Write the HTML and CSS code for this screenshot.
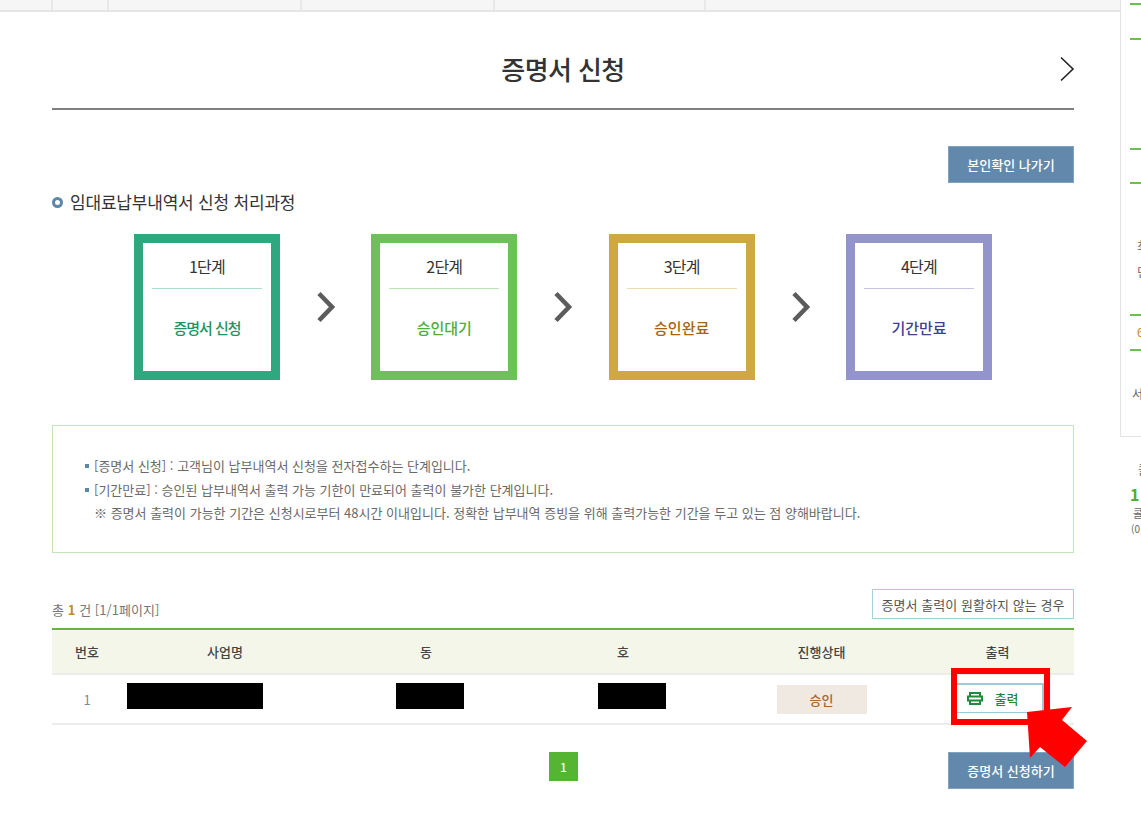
FILE: index.html
```html
<!DOCTYPE html>
<html lang="ko">
<head>
<meta charset="utf-8">
<title>증명서 신청</title>
<link rel="stylesheet" href="styles.css">
</head>
<body>
<div class="page">
  <main class="main">
    <div class="tabs"><span class="tab t1"></span><span class="tab t2"></span><span class="tab t3"></span><span class="tab t4"></span><span class="tab t5"></span><span class="tab t6"></span></div>
    <div class="content">
      <header class="head">
        <h1>증명서 신청</h1>
        <svg class="next" width="16" height="26" viewBox="0 0 16 26"><path d="M2 1.500 14 13 2 24.500" fill="none" stroke="#222" stroke-width="1.600"/></svg>
      </header>
      <div class="actions"><a class="btn">본인확인 나가기</a></div>
      <h2 class="sub">임대료납부내역서 신청 처리과정</h2>
      <div class="steps">
        <div class="step s1"><div class="num">1단계</div><div class="name">증명서 신청</div></div>
        <svg class="arrow" width="20" height="32" viewBox="0 0 20 32"><path d="M3 2.500 16 16 3 29.500" fill="none" stroke="#5c5c5c" stroke-width="4.600"/></svg>
        <div class="step s2"><div class="num">2단계</div><div class="name">승인대기</div></div>
        <svg class="arrow" width="20" height="32" viewBox="0 0 20 32"><path d="M3 2.500 16 16 3 29.500" fill="none" stroke="#5c5c5c" stroke-width="4.600"/></svg>
        <div class="step s3"><div class="num">3단계</div><div class="name">승인완료</div></div>
        <svg class="arrow" width="20" height="32" viewBox="0 0 20 32"><path d="M3 2.500 16 16 3 29.500" fill="none" stroke="#5c5c5c" stroke-width="4.600"/></svg>
        <div class="step s4"><div class="num">4단계</div><div class="name">기간만료</div></div>
      </div>
      <div class="notice">
        <p class="bul">[증명서 신청] : 고객님이 납부내역서 신청을 전자접수하는 단계입니다.</p>
        <p class="bul">[기간만료] : 승인된 납부내역서 출력 가능 기한이 만료되어 출력이 불가한 단계입니다.</p>
        <p class="ref">※ 증명서 출력이 가능한 기간은 신청시로부터 48시간 이내입니다. 정확한 납부내역 증빙을 위해 출력가능한 기간을 두고 있는 점 양해바랍니다.</p>
      </div>
      <div class="listbar">
        <span class="count">총 <b>1</b> 건 [1/1페이지]</span>
        <a class="help">증명서 출력이 원활하지 않는 경우</a>
      </div>
      <table class="list">
        <thead><tr><th class="c1">번호</th><th class="c2">사업명</th><th class="c3">동</th><th class="c4">호</th><th class="c5">진행상태</th><th class="c6">출력</th></tr></thead>
        <tbody><tr>
          <td>1</td>
          <td class="mask-cell"><span class="mask m1"></span></td>
          <td class="mask-cell"><span class="mask m2"></span></td>
          <td class="mask-cell"><span class="mask m2 m3"></span></td>
          <td><span class="state">승인</span></td>
          <td><a class="print"><svg width="16" height="13" viewBox="0 0 16 13"><path d="M3 4.500V1h10v3.500M1 4.500h14v4H1zM3 8.500V12h10V8.500" fill="none" stroke="#1f8a3c" stroke-width="2"/></svg>출력</a></td>
        </tr></tbody>
      </table>
      <div class="foot">
        <a class="pagenum">1</a>
        <a class="btn wide">증명서 신청하기</a>
      </div>
    </div>
  </main>
  <aside class="side">
    <div class="box">
      <i class="line l1"></i><i class="line l2"></i><i class="line l3"></i><i class="line l4"></i><i class="line l5"></i><i class="line l6"></i>
      <span class="frag f1">최</span><span class="frag f2">던</span><span class="frag f3">6</span><span class="frag f4">서</span>
    </div>
    <div class="tel"><span class="tel1">콜</span><strong>1</strong><span class="tel2">콜</span><span class="tel3">(0</span></div>
  </aside>
</div>
<svg class="mark-arrow" width="70" height="70" viewBox="0 0 70 70"><polygon points="4,7 49,2 39,15 64,36 42,62 17,42 7,53" fill="#ff0000"/></svg>
<div class="mark-box"></div>
</body>
</html>
```
FILE: styles.css
```css
* { box-sizing: border-box; }
html, body { margin: 0; padding: 0; background: #fff; }
body { font-family: "Noto Sans CJK KR", "Noto Sans", sans-serif; color: #333; overflow: hidden; height: 816px; position: relative; }
a { text-decoration: none; }
.page { display: flex; width: 1141px; }
.main { width: 1120px; flex: none; }
.tabs { display: flex; height: 12px; background: #f6f6f6; border-bottom: 2px solid #e6e6e6; }
.tab { display: block; border-right: 2px solid #e8e8e8; height: 10px; }
.t1 { width: 53px; } .t2 { width: 56px; } .t3 { width: 193px; } .t4 { width: 193px; } .t5 { width: 211px; } .t6 { flex: 1; border-right: 0; }
.content { padding: 0 46px 0 52px; }
.head { position: relative; height: 98px; border-bottom: 2px solid #808080; display: flex; justify-content: center; align-items: center; padding-top: 18px; }
.head h1 { margin: 0; font-size: 26px; font-weight: 500; color: #333; line-height: 36px; letter-spacing: -0.6px; }
.next { position: absolute; right: -1px; top: 44px; }
.actions { display: flex; justify-content: flex-end; margin-top: 36px; }
.btn { display: flex; align-items: center; justify-content: center; width: 126px; height: 37px; background: #6289ab; border: 1px solid #7fa3c0; color: #fff; font-size: 13px; font-weight: 500; letter-spacing: 0; }
.sub { margin: 7px 0 0; padding-left: 18px; font-size: 17px; font-weight: 400; line-height: 24px; position: relative; letter-spacing: -0.2px; color: #333; }
.sub::before { content: ""; position: absolute; left: 0; top: 7px; width: 5px; height: 5px; border: 3px solid #5d87a8; border-radius: 50%; box-sizing: content-box; }
.steps { display: flex; align-items: center; margin: 20px 0 0 82px; }
.step { width: 146px; height: 146px; border: 9px solid; background: #fff; display: flex; flex-direction: column; align-items: center; }
.arrow { margin: 0 35.330px 0 36px; flex: none; width: 20px; }
.s1 { border-color: #2fa87f; } .s2 { border-color: #6cc258; } .s3 { border-color: #cfa845; } .s4 { border-color: #9494cc; }
.num { width: 110px; height: 46px; padding-top: 10px; text-align: center; font-size: 16px; line-height: 26px; color: #333; border-bottom: 1px solid; letter-spacing: -0.8px; }
.s1 .num { border-color: #a9dfcc; } .s2 .num { border-color: #b9e4ae; } .s3 .num { border-color: #ecdcb2; } .s4 .num { border-color: #c4c4e4; }
.name { margin-top: 26px; font-size: 15px; line-height: 26px; font-weight: 500; letter-spacing: 0; }
.s1 .name { color: #1f9461; letter-spacing: -1px; } .s2 .name { color: #4cae38; } .s3 .name { color: #a8630f; } .s4 .name { color: #3f3f93; }
.notice { margin-top: 45px; height: 128px; border: 1px solid #c3e6bb; padding: 28px 0 0 32px; font-size: 13px; color: #6a6a6a; line-height: 23.500px; }
.notice p { margin: 0; }
.bul { position: relative; padding-left: 9px; }
.bul::before { content: ""; position: absolute; left: 0; top: 10px; width: 4px; height: 4px; background: #5d87a8; }
.ref { padding-left: 9px; }
.listbar { display: flex; justify-content: space-between; align-items: flex-end; margin-top: 36px; height: 30px; }
.count { font-size: 13px; color: #777; line-height: 18px; margin-bottom: 0; letter-spacing: 0.05px; }
.count b { color: #c98a1b; font-weight: 700; }
.help { display: flex; align-items: center; justify-content: center; width: 202px; height: 30px; background: #fff; border: 1px solid #a6cfdc; font-size: 13px; color: #555; letter-spacing: 0.05px; }
.list { width: 100%; border-collapse: collapse; table-layout: fixed; margin-top: 9px; border-top: 2px solid #62b73b; }
.list th { height: 45px; background: #f4f6ea; border-bottom: 2px solid #ececec; font-size: 13px; font-weight: 500; color: #444; padding: 0; }
.list td { height: 50px; border-bottom: 2px solid #ececec; text-align: center; font-size: 13px; color: #7a8a96; padding: 0; }
.c1 { width: 70px; } .c2 { width: 206px; } .c3 { width: 196px; } .c4 { width: 198px; } .c5 { width: 199px; } .c6 { width: 153px; }
.mask-cell { text-align: left !important; }
.mask { display: block; height: 26px; background: #000; margin-top: -6px; }
.m1 { width: 136px; margin-left: 5px; }
.m2 { width: 68px; margin-left: 68px; }
.m3 { margin-left: 74px; }
.state { display: inline-flex; align-items: center; justify-content: center; width: 90px; height: 29px; background: #f0e9e2; color: #a5672a; font-size: 13px; font-weight: 500; }
.print { display: inline-flex; align-items: center; width: 92px; height: 30px; margin-top: -2px; padding-left: 14px; gap: 12px; background: #fff; border: 1px solid #9fc8d8; border-top-width: 2px; border-right-width: 2px; color: #1f8a3c; font-size: 13px; font-weight: 500; }
.foot { position: relative; display: flex; justify-content: flex-end; margin-top: 27px; }
.pagenum { position: absolute; left: 497px; top: 0; width: 29px; height: 29px; background: #55b431; color: #fff; font-size: 12px; font-weight: 500; display: flex; align-items: center; justify-content: center; }
.wide { width: 126px; height: 37px; }
.side { width: 21px; flex: none; overflow: hidden; }
.box { position: relative; height: 437px; border-left: 1px solid #e4e4e4; border-bottom: 1px solid #e4e4e4; }
.line { position: absolute; left: 9px; right: 0; height: 2px; background: #6cc050; }
.l1 { top: 3px; } .l2 { top: 38px; } .l3 { top: 148px; } .l4 { top: 182px; } .l5 { top: 314px; } .l6 { top: 349px; }
.frag { position: absolute; font-size: 12px; color: #666; line-height: 16px; }
.f1 { left: 16px; top: 238px; } .f2 { left: 16px; top: 264px; } .f3 { left: 16px; top: 324px; color: #c98a1b; } .f4 { left: 11px; top: 386px; }
.tel { position: relative; height: 100px; }
.tel span, .tel strong { position: absolute; white-space: nowrap; }
.tel1 { left: 18px; top: 24px; font-size: 12px; color: #666; }
.tel strong { left: 10px; top: 46px; font-size: 16px; font-weight: 700; color: #4cae38; line-height: 22px; }
.tel2 { left: 13px; top: 68px; font-size: 11px; color: #666; }
.tel3 { left: 11px; top: 84px; font-size: 10px; color: #666; }
.mark-box { position: absolute; left: 951px; top: 668px; width: 99px; height: 57px; border: 6px solid #ff0000; }
.mark-arrow { position: absolute; left: 1023px; top: 705px; }
```
